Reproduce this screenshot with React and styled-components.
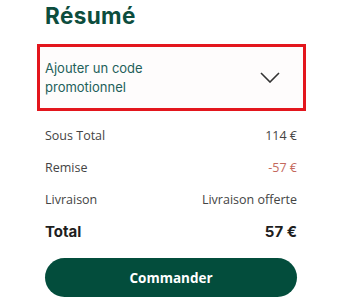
import React from 'react';
import styled, { createGlobalStyle } from 'styled-components';

const GlobalStyle = createGlobalStyle`
  body {
    margin: 0;
    background: #ffffff;
  }
`;

const StyledSummary = styled.div`
  width: 350px;
  box-sizing: border-box;
  padding: 0 53px 0 45px;
`;

const Title = styled.h2`
  margin: 0;
  height: 44px;
  line-height: 32px;
  font-family: Inter, 'Open Sans', sans-serif;
  font-size: 22.5px;
  font-weight: 700;
  color: #0c4d3d;
  letter-spacing: 0.4px;
`;

const PromoBox = styled.div`
  display: flex;
  align-items: center;
  justify-content: space-between;
  box-sizing: border-box;
  height: 67px;
  margin: 0 -9px 0 -8px;
  padding: 0 23px 0 5px;
  border: 3px solid #e3161d;
  background: #fefcfc;
`;

const PromoLabel = styled.div`
  font-family: Inter, 'Open Sans', sans-serif;
  font-size: 13px;
  line-height: 19px;
  color: #23605a;
`;

const Chevron = styled.svg`
  width: 20px;
  height: 11px;
  stroke: #333333;
`;

const Rows = styled.div`
  margin-top: 8px;
`;

const Row = styled.div`
  display: flex;
  align-items: center;
  justify-content: space-between;
  height: 32px;
  font-family: ${({ $total }) => ($total ? "Inter, 'Open Sans', sans-serif" : "'Open Sans', 'Noto Sans', sans-serif")};
  font-size: ${({ $total }) => ($total ? '15px' : '12.5px')};
  font-weight: ${({ $total }) => ($total ? 700 : 400)};
  color: ${({ $total }) => ($total ? '#1e1e1e' : '#444444')};
`;

const Value = styled.span`
  color: ${({ $discount }) => ($discount ? '#c4685c' : 'inherit')};
`;

const OrderButton = styled.button`
  display: block;
  width: 100%;
  height: 39px;
  margin-top: 11px;
  border: none;
  border-radius: 20px;
  background: #034d3c;
  color: #ffffff;
  font-family: 'Open Sans', 'Noto Sans', sans-serif;
  font-size: 13.5px;
  font-weight: 700;
  cursor: pointer;
`;

const App = () => {
  return (
    <StyledSummary>
      <GlobalStyle />
      <Title>Résumé</Title>
      <PromoBox>
        <PromoLabel>
          Ajouter un code
          <br />
          promotionnel
        </PromoLabel>
        <Chevron viewBox="0 0 20 11" fill="none" strokeWidth="1.6">
          <polyline points="1,1 10,10 19,1" />
        </Chevron>
      </PromoBox>
      <Rows>
        <Row>
          <span>Sous Total</span>
          <Value>114 €</Value>
        </Row>
        <Row>
          <span>Remise</span>
          <Value $discount>-57 €</Value>
        </Row>
        <Row>
          <span>Livraison</span>
          <Value>Livraison offerte</Value>
        </Row>
        <Row $total>
          <span>Total</span>
          <Value>57 €</Value>
        </Row>
      </Rows>
      <OrderButton type="button">Commander</OrderButton>
    </StyledSummary>
  );
};

export default App;
